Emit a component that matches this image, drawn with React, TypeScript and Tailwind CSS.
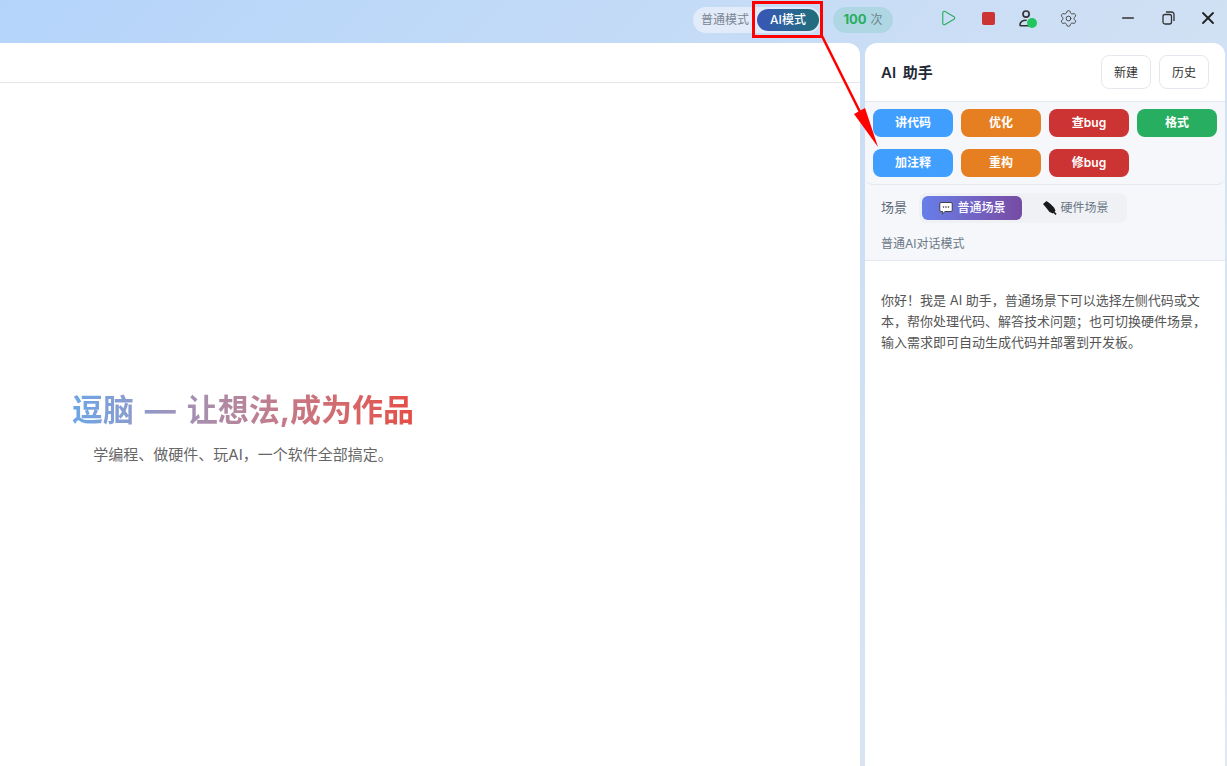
import * as React from "react";
import { Play, Settings, Minus, X } from "lucide-react";

const actions = [
  { label: "讲代码", color: "bg-[#409eff]" },
  { label: "优化", color: "bg-[#e67e22]" },
  { label: "查bug", color: "bg-[#cc3333]" },
  { label: "格式", color: "bg-[#27ae60]" },
  { label: "加注释", color: "bg-[#409eff]" },
  { label: "重构", color: "bg-[#e67e22]" },
  { label: "修bug", color: "bg-[#cc3333]" },
];

function RestoreIcon() {
  return (
    <svg className="shrink-0" width="13" height="14" viewBox="0 0 13 14" fill="none" stroke="#333" strokeWidth="1.3">
      <rect x="1" y="3.5" width="8.5" height="9.5" rx="2" />
      <path d="M4 1h5.500A2.500 2.500 0 0 1 12 3.500V10" />
    </svg>
  );
}

function UserIcon() {
  return (
    <svg className="shrink-0" width="15" height="18.500" viewBox="0 0 18 22" fill="none" stroke="#333" strokeWidth="2">
      <circle cx="8.500" cy="6" r="3.700" />
      <path d="M12 20H2.500a1.300 1.300 0 0 1-1.300-1.300c0-3.500 3.300-5.300 7.300-5.300" strokeLinecap="round" />
    </svg>
  );
}

function ChatIcon() {
  return (
    <svg className="shrink-0" width="14" height="14" viewBox="0 0 14 14">
      <path d="M2 1.500h10a1.200 1.200 0 0 1 1.200 1.200v6.600a1.200 1.200 0 0 1-1.200 1.200H6l-2.400 2.400v-2.400H2a1.200 1.200 0 0 1-1.200-1.200V2.700A1.200 1.200 0 0 1 2 1.500z" fill="#fff" stroke="#333" strokeWidth="0.9" />
      <circle cx="4.500" cy="6" r="0.800" fill="#333" />
      <circle cx="7" cy="6" r="0.800" fill="#333" />
      <circle cx="9.500" cy="6" r="0.800" fill="#333" />
    </svg>
  );
}

function PlugIcon() {
  return (
    <svg className="shrink-0" width="14" height="14" viewBox="0 0 14 14">
      <path d="M3.500 0 0 3l3 3.500 3.500 4.500 3.500 1.500 2.500-3-1.500-3L7 2.500z" fill="#1a1a1a" />
      <path d="M10 10 13 13.500" stroke="#1a1a1a" strokeWidth="1.600" />
    </svg>
  );
}

export default function App() {
  return (
    <div className="relative h-[766px] w-[1227px] overflow-hidden bg-[linear-gradient(135deg,#b4d4fa,#e2e8f0)] font-['Inter','Noto_Sans_CJK_SC',sans-serif]">
      <div className="flex h-[43px] items-center justify-end pb-1">
        <div className="flex h-[26px] w-[128px] items-center justify-between rounded-full bg-[#e1ebf9] pl-2 pr-[2px]">
          <span className="text-xs text-[#7a8594]">普通模式</span>
          <span className="flex h-[22px] w-[62px] items-center justify-center rounded-full bg-gradient-to-r from-[#3a55b8] to-[#1f6e78] text-xs font-medium text-white">
            AI模式
          </span>
        </div>
        <div className="ml-[12px] flex h-[26px] w-[60px] items-center justify-center gap-1 rounded-full bg-[#aed7e3]">
          <span className="text-[13px] font-bold text-[#27ae60]">100</span>
          <span className="text-xs text-[#6f8490]">次</span>
        </div>
        <div className="mb-[3px] ml-[47px] flex items-center">
          <div className="flex w-4 justify-center">
            <Play size={18} className="shrink-0 text-[#27ae60]" strokeWidth={1.5} />
          </div>
          <div className="ml-[24px] flex w-4 justify-center">
            <span className="h-[13px] w-[13px] rounded-[2px] bg-[#cc3333]" />
          </div>
          <div className="relative ml-[22px] flex w-4 justify-center">
            <UserIcon />
            <span className="absolute -bottom-[1px] -right-[3px] h-[10px] w-[10px] rounded-full bg-[#22c55e]" />
          </div>
          <div className="ml-[26px] flex w-4 justify-center">
            <Settings size={19} className="shrink-0 text-[#444]" strokeWidth={1.2} />
          </div>
        </div>
        <div className="mb-1 ml-[44px] mr-[11px] flex items-center gap-[24px]">
          <div className="flex w-4 justify-center">
            <Minus size={18} className="shrink-0 text-[#333]" strokeWidth={2.2} />
          </div>
          <div className="flex w-4 justify-center">
            <RestoreIcon />
          </div>
          <div className="flex w-4 justify-center">
            <X size={20} className="shrink-0 text-[#222]" strokeWidth={2.2} />
          </div>
        </div>
      </div>

      <div className="flex h-[723px] gap-[5px] pr-[2px]">
        <div className="flex w-[860px] flex-col rounded-tr-xl bg-white">
          <div className="h-[40px] shrink-0 border-b border-[#e5e7eb]" />
          <div className="flex flex-1 items-center">
            <div className="mt-1 w-[486px] text-center">
              <div className="mx-auto w-fit whitespace-nowrap bg-gradient-to-r from-[#6aa6e8] to-[#e64c44] bg-clip-text text-[31px] font-bold leading-[44px] text-transparent [word-spacing:3.5px]">
                逗脑 — 让想法,成为作品
              </div>
              <div className="mt-[13px] text-[15px] leading-5 text-[#666]">学编程、做硬件、玩AI，一个软件全部搞定。</div>
            </div>
          </div>
        </div>

        <div className="flex w-[360px] flex-col rounded-t-xl bg-white">
          <div className="flex h-[59px] shrink-0 items-center justify-between border-b border-[#e4e7ee] px-4">
            <span className="pt-[2px] text-[15px] font-semibold text-[#1f2937] [word-spacing:3px]">AI 助手</span>
            <div className="flex gap-2">
              <button className="h-[34px] w-[50px] rounded-lg border border-[#e4e7ee] bg-white pt-[2px] text-xs text-[#333]">新建</button>
              <button className="h-[34px] w-[50px] rounded-lg border border-[#e4e7ee] bg-white pt-[2px] text-xs text-[#333]">历史</button>
            </div>
          </div>

          <div className="shrink-0 bg-[#f5f7fb]">
            <div className="grid grid-cols-4 gap-x-2 gap-y-3 rounded-b-lg border-b border-[#e4e7ee] px-2 pb-[7px] pt-[7px]">
              {actions.map((a) => (
                <button key={a.label} className={`flex h-[28px] items-center justify-center rounded-lg text-xs font-semibold text-white ${a.color}`}>
                  {a.label}
                </button>
              ))}
            </div>
            <div className="flex items-center gap-3 pl-4 pt-2">
              <span className="text-[13px] text-[#5f6b7a]">场景</span>
              <div className="flex h-[30px] w-[208px] items-center rounded-lg bg-[#eff1f5] pl-[3px]">
                <div className="flex h-[24px] w-[100px] items-center justify-center gap-[5px] rounded-md bg-gradient-to-r from-[#667eea] to-[#764ba2] text-xs font-medium text-white">
                  <ChatIcon />
                  普通场景
                </div>
                <div className="flex h-[24px] w-[105px] items-center justify-center gap-1 pl-[2px] text-xs text-[#6b7785]">
                  <PlugIcon />
                  硬件场景
                </div>
              </div>
            </div>
            <div className="flex h-[38px] items-center border-b border-[#e4e7ee] pl-4 pt-[5px] text-xs text-[#6b7785]">普通AI对话模式</div>
          </div>

          <div className="px-4 pt-[29px] text-[13px] leading-[21px] text-[#555]">
            你好！我是 AI 助手，普通场景下可以选择左侧代码或文本，帮你处理代码、解答技术问题；也可切换硬件场景，输入需求即可自动生成代码并部署到开发板。
          </div>
        </div>
      </div>

      <div className="absolute left-[752px] top-[1px] h-[37px] w-[71px] border-[3px] border-[#ff0000]" />
      <svg className="absolute left-0 top-0" width="1227" height="766" fill="none">
        <path d="M822 36 860 112" stroke="#ff0000" strokeWidth="2.500" />
        <path d="M854 114 865 108 878 147z" fill="#ff0000" />
      </svg>
    </div>
  );
}
